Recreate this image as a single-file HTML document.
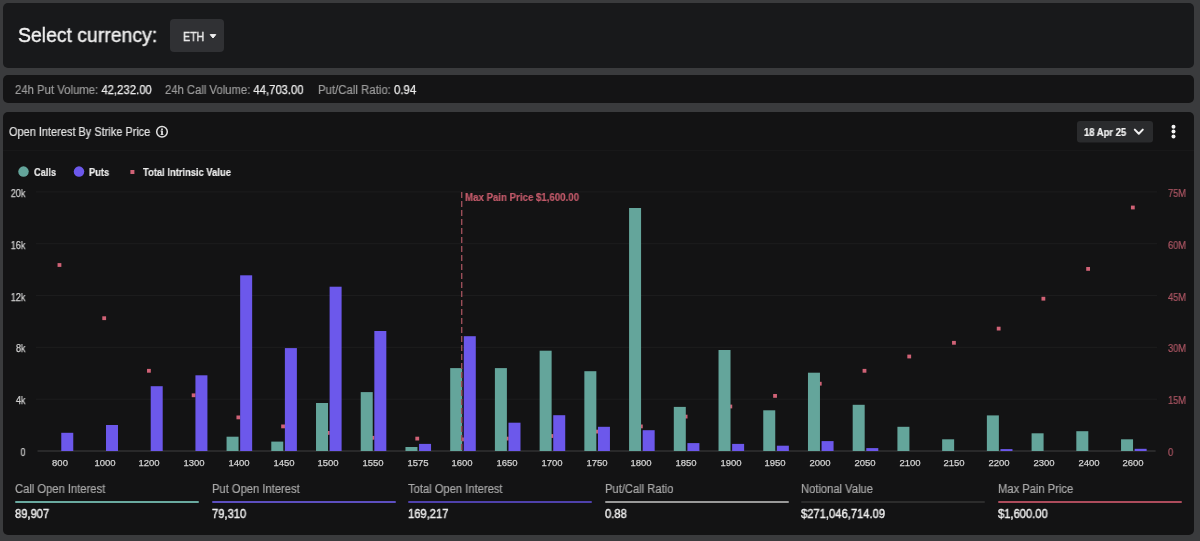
<!DOCTYPE html>
<html><head><meta charset="utf-8">
<style>
html,body{margin:0;padding:0;}
body{width:1200px;height:541px;background:#3a3b3d;position:relative;overflow:hidden;font-family:"Liberation Sans",sans-serif;}
.p{position:absolute;left:3px;width:1191px;border-radius:5px;}
#p1{top:3px;height:65px;background:#18191b;}
#p2{top:75px;height:28.3px;background:#141415;}
#p3{top:111.7px;height:423px;background:#131314;}
.a{position:absolute;white-space:nowrap;transform-origin:0 0;z-index:3;will-change:transform;-webkit-text-stroke:0.2px currentColor;}
.a b{color:#ececec;font-weight:normal;-webkit-text-stroke:0.25px #ececec;}
#btn{position:absolute;left:170px;top:19px;width:54px;height:33px;border-radius:4px;background:#303134;}
.caret{position:absolute;left:210px;top:34.5px;width:0;height:0;border-left:3.5px solid transparent;border-right:3.5px solid transparent;border-top:4px solid #e6e6e6;}
.yl{position:absolute;left:0;width:28.2px;text-align:right;font-size:10px;line-height:10px;color:#d2d2d2;-webkit-text-stroke:0.25px #d2d2d2;transform:scaleX(0.9);transform-origin:0 0;will-change:transform;}
.yr{position:absolute;left:1168px;font-size:10px;line-height:10px;color:#ad5664;-webkit-text-stroke:0.2px #ad5664;transform:scaleX(0.93);transform-origin:0 0;will-change:transform;}
.xl{position:absolute;width:40px;text-align:center;font-size:9.5px;line-height:9.5px;color:#d2d2d2;-webkit-text-stroke:0.25px #d2d2d2;will-change:transform;}
.ln{position:absolute;top:500.5px;height:2.1px;width:184px;border-radius:1.5px;}
svg{position:absolute;left:0;top:0;}
</style></head><body>
<div class="p" id="p1"></div>
<div class="p" id="p2"></div>
<div class="p" id="p3"></div>
<div id="btn"></div>
<div style="position:absolute;left:3px;top:150px;width:1191px;height:1px;background:#181819"></div>
<svg width="1200" height="541" style="z-index:1">
<circle cx="162" cy="131.8" r="5.3" fill="none" stroke="#e0e0e0" stroke-width="1.5"/>
<rect x="161.1" y="130.6" width="1.8" height="4.2" fill="#e0e0e0"/>
<rect x="160.5" y="130.6" width="1.4" height="0.9" fill="#e0e0e0"/>
<rect x="160.6" y="134.1" width="2.8" height="0.9" fill="#e0e0e0"/>
<circle cx="162" cy="129.2" r="0.95" fill="#e0e0e0"/>
<circle cx="23.5" cy="171.6" r="5.25" fill="#64a59b"/>
<circle cx="79" cy="171.6" r="5.25" fill="#6c58eb"/>
<path d="M210.2,34.6 L215.8,34.6 L213,38 Z" fill="#f0f0f0" stroke="#f0f0f0" stroke-width="1" stroke-linejoin="round"/>
<rect x="130.4" y="170" width="4" height="4" fill="#d06276"/>
<rect x="1077" y="121" width="76" height="21.5" rx="3" fill="#2a2b2d"/>
<polyline points="1134.8,129.6 1138.8,133.8 1142.8,129.6" fill="none" stroke="#f0f0f0" stroke-width="2" stroke-linecap="round" stroke-linejoin="round"/>
<circle cx="1173.5" cy="126.7" r="2" fill="#f4f4f4"/>
<circle cx="1173.5" cy="131.6" r="2" fill="#f4f4f4"/>
<circle cx="1173.5" cy="136.5" r="2" fill="#f4f4f4"/>
<line x1="36" x2="1157.1" y1="191.90" y2="191.90" stroke="#1d1d1e" stroke-width="1"/>
<line x1="36" x2="1157.1" y1="243.72" y2="243.72" stroke="#1d1d1e" stroke-width="1"/>
<line x1="36" x2="1157.1" y1="295.54" y2="295.54" stroke="#1d1d1e" stroke-width="1"/>
<line x1="36" x2="1157.1" y1="347.36" y2="347.36" stroke="#1d1d1e" stroke-width="1"/>
<line x1="36" x2="1157.1" y1="399.18" y2="399.18" stroke="#1d1d1e" stroke-width="1"/>
<line x1="37.5" x2="1155.6" y1="451.00" y2="451.00" stroke="#323232" stroke-width="1.6"/>
<rect x="57.56" y="263.10" width="3.8" height="3.8" fill="#d06276"/>
<rect x="102.29" y="316.30" width="3.8" height="3.8" fill="#d06276"/>
<rect x="147.01" y="368.90" width="3.8" height="3.8" fill="#d06276"/>
<rect x="191.73" y="393.40" width="3.8" height="3.8" fill="#d06276"/>
<rect x="236.46" y="415.50" width="3.8" height="3.8" fill="#d06276"/>
<rect x="281.18" y="424.50" width="3.8" height="3.8" fill="#d06276"/>
<rect x="325.91" y="431.00" width="3.8" height="3.8" fill="#d06276"/>
<rect x="370.63" y="435.90" width="3.8" height="3.8" fill="#d06276"/>
<rect x="415.35" y="436.70" width="3.8" height="3.8" fill="#d06276"/>
<rect x="460.08" y="437.50" width="3.8" height="3.8" fill="#d06276"/>
<rect x="504.80" y="436.70" width="3.8" height="3.8" fill="#d06276"/>
<rect x="549.53" y="434.10" width="3.8" height="3.8" fill="#d06276"/>
<rect x="594.25" y="429.70" width="3.8" height="3.8" fill="#d06276"/>
<rect x="638.97" y="424.50" width="3.8" height="3.8" fill="#d06276"/>
<rect x="683.70" y="414.70" width="3.8" height="3.8" fill="#d06276"/>
<rect x="728.42" y="404.60" width="3.8" height="3.8" fill="#d06276"/>
<rect x="773.15" y="394.00" width="3.8" height="3.8" fill="#d06276"/>
<rect x="817.87" y="381.80" width="3.8" height="3.8" fill="#d06276"/>
<rect x="862.59" y="368.90" width="3.8" height="3.8" fill="#d06276"/>
<rect x="907.32" y="354.60" width="3.8" height="3.8" fill="#d06276"/>
<rect x="952.04" y="340.90" width="3.8" height="3.8" fill="#d06276"/>
<rect x="996.77" y="326.70" width="3.8" height="3.8" fill="#d06276"/>
<rect x="1041.49" y="296.80" width="3.8" height="3.8" fill="#d06276"/>
<rect x="1086.21" y="267.00" width="3.8" height="3.8" fill="#d06276"/>
<rect x="1130.94" y="205.60" width="3.8" height="3.8" fill="#d06276"/>
<rect x="61.26" y="432.80" width="12" height="18.20" fill="#6c58eb"/>
<rect x="105.99" y="425.00" width="12" height="26.00" fill="#6c58eb"/>
<rect x="150.71" y="386.20" width="12" height="64.80" fill="#6c58eb"/>
<rect x="195.43" y="375.30" width="12" height="75.70" fill="#6c58eb"/>
<rect x="226.56" y="436.70" width="12" height="14.30" fill="#64a59b"/>
<rect x="240.16" y="275.30" width="12" height="175.70" fill="#6c58eb"/>
<rect x="271.28" y="441.60" width="12" height="9.40" fill="#64a59b"/>
<rect x="284.88" y="348.10" width="12" height="102.90" fill="#6c58eb"/>
<rect x="316.01" y="403.00" width="12" height="48.00" fill="#64a59b"/>
<rect x="329.61" y="286.70" width="12" height="164.30" fill="#6c58eb"/>
<rect x="360.73" y="392.10" width="12" height="58.90" fill="#64a59b"/>
<rect x="374.33" y="331.00" width="12" height="120.00" fill="#6c58eb"/>
<rect x="405.45" y="447.00" width="12" height="4.00" fill="#64a59b"/>
<rect x="419.05" y="443.90" width="12" height="7.10" fill="#6c58eb"/>
<rect x="450.18" y="368.10" width="12" height="82.90" fill="#64a59b"/>
<rect x="463.78" y="336.20" width="12" height="114.80" fill="#6c58eb"/>
<rect x="494.90" y="368.10" width="12" height="82.90" fill="#64a59b"/>
<rect x="508.50" y="422.70" width="12" height="28.30" fill="#6c58eb"/>
<rect x="539.63" y="350.70" width="12" height="100.30" fill="#64a59b"/>
<rect x="553.23" y="415.20" width="12" height="35.80" fill="#6c58eb"/>
<rect x="584.35" y="371.20" width="12" height="79.80" fill="#64a59b"/>
<rect x="597.95" y="426.80" width="12" height="24.20" fill="#6c58eb"/>
<rect x="629.07" y="208.00" width="12" height="243.00" fill="#64a59b"/>
<rect x="642.67" y="430.20" width="12" height="20.80" fill="#6c58eb"/>
<rect x="673.80" y="406.90" width="12" height="44.10" fill="#64a59b"/>
<rect x="687.40" y="443.10" width="12" height="7.90" fill="#6c58eb"/>
<rect x="718.52" y="350.00" width="12" height="101.00" fill="#64a59b"/>
<rect x="732.12" y="443.90" width="12" height="7.10" fill="#6c58eb"/>
<rect x="763.25" y="410.30" width="12" height="40.70" fill="#64a59b"/>
<rect x="776.85" y="445.70" width="12" height="5.30" fill="#6c58eb"/>
<rect x="807.97" y="372.70" width="12" height="78.30" fill="#64a59b"/>
<rect x="821.57" y="441.10" width="12" height="9.90" fill="#6c58eb"/>
<rect x="852.69" y="404.80" width="12" height="46.20" fill="#64a59b"/>
<rect x="866.29" y="448.10" width="12" height="2.90" fill="#6c58eb"/>
<rect x="897.42" y="426.80" width="12" height="24.20" fill="#64a59b"/>
<rect x="942.14" y="439.30" width="12" height="11.70" fill="#64a59b"/>
<rect x="986.87" y="415.40" width="12" height="35.60" fill="#64a59b"/>
<rect x="1000.47" y="449.10" width="12" height="1.90" fill="#6c58eb"/>
<rect x="1031.59" y="433.30" width="12" height="17.70" fill="#64a59b"/>
<rect x="1076.31" y="431.20" width="12" height="19.80" fill="#64a59b"/>
<rect x="1121.04" y="439.30" width="12" height="11.70" fill="#64a59b"/>
<rect x="1134.64" y="448.80" width="12" height="2.20" fill="#6c58eb"/>
<line x1="461.7" x2="461.7" y1="191.9" y2="450.5" stroke="#9a4e58" stroke-width="1.4" stroke-dasharray="6 3"/>
</svg>
<div class="a" id="sel" style="left:18.0px;top:26.49px;font-size:19.5px;line-height:19.5px;color:#f2f2f2;transform:scaleX(0.995);-webkit-text-stroke:0.4px #f2f2f2;">Select currency:</div>
<div class="a" id="eth" style="left:183.4px;top:30.67px;font-size:12.2px;line-height:12.2px;color:#e8e8e8;transform:scaleX(0.87);-webkit-text-stroke:0.45px #e8e8e8;">ETH</div>
<div class="a" id="s1" style="left:15.3px;top:83.84px;font-size:12px;line-height:12px;color:#9c9c9c;transform:scaleX(0.945);">24h Put Volume: <b>42,232.00</b></div>
<div class="a" id="s2" style="left:165.4px;top:83.84px;font-size:12px;line-height:12px;color:#9c9c9c;transform:scaleX(0.94);">24h Call Volume: <b>44,703.00</b></div>
<div class="a" id="s3" style="left:317.7px;top:83.84px;font-size:12px;line-height:12px;color:#9c9c9c;transform:scaleX(0.95);">Put/Call Ratio: <b>0.94</b></div>
<div class="a" id="title" style="left:8.8px;top:125.84px;font-size:12px;line-height:12px;color:#e2e2e2;transform:scaleX(0.913);">Open Interest By Strike Price</div>
<div class="a" id="lg1" style="left:33.8px;top:166.63px;font-size:10.6px;line-height:10.6px;color:#ececec;transform:scaleX(0.87);font-weight:bold;">Calls</div>
<div class="a" id="lg2" style="left:89.4px;top:166.63px;font-size:10.6px;line-height:10.6px;color:#ececec;transform:scaleX(0.88);font-weight:bold;">Puts</div>
<div class="a" id="lg3" style="left:143.4px;top:166.63px;font-size:10.6px;line-height:10.6px;color:#ececec;transform:scaleX(0.885);font-weight:bold;">Total Intrinsic Value</div>
<div class="a" id="date" style="left:1083.8px;top:127.94px;font-size:10px;line-height:10px;color:#f2f2f2;transform:scaleX(0.945);font-weight:bold;">18 Apr 25</div>
<div class="a" id="mp" style="left:464.8px;top:191.60px;font-size:10.75px;line-height:10.75px;color:#c25a6a;transform:scaleX(0.9);font-weight:bold;">Max Pain Price $1,600.00</div>
<div class="a" id="l1" style="left:15px;top:482.64px;font-size:12px;line-height:12px;color:#a9a9a9;transform:scaleX(0.932);">Call Open Interest</div>
<div class="a" id="v1" style="left:15px;top:508.14px;font-size:12px;line-height:12px;color:#ededed;transform:scaleX(0.932);-webkit-text-stroke:0.4px #ededed;">89,907</div>
<div class="a" id="l2" style="left:211.5px;top:482.64px;font-size:12px;line-height:12px;color:#a9a9a9;transform:scaleX(0.932);">Put Open Interest</div>
<div class="a" id="v2" style="left:211.5px;top:508.14px;font-size:12px;line-height:12px;color:#ededed;transform:scaleX(0.932);-webkit-text-stroke:0.4px #ededed;">79,310</div>
<div class="a" id="l3" style="left:408px;top:482.64px;font-size:12px;line-height:12px;color:#a9a9a9;transform:scaleX(0.932);">Total Open Interest</div>
<div class="a" id="v3" style="left:408px;top:508.14px;font-size:12px;line-height:12px;color:#ededed;transform:scaleX(0.932);-webkit-text-stroke:0.4px #ededed;">169,217</div>
<div class="a" id="l4" style="left:605px;top:482.64px;font-size:12px;line-height:12px;color:#a9a9a9;transform:scaleX(0.932);">Put/Call Ratio</div>
<div class="a" id="v4" style="left:605px;top:508.14px;font-size:12px;line-height:12px;color:#ededed;transform:scaleX(0.932);-webkit-text-stroke:0.4px #ededed;">0.88</div>
<div class="a" id="l5" style="left:801px;top:482.64px;font-size:12px;line-height:12px;color:#a9a9a9;transform:scaleX(0.932);">Notional Value</div>
<div class="a" id="v5" style="left:801px;top:508.14px;font-size:12px;line-height:12px;color:#ededed;transform:scaleX(0.932);-webkit-text-stroke:0.4px #ededed;">$271,046,714.09</div>
<div class="a" id="l6" style="left:997.5px;top:482.64px;font-size:12px;line-height:12px;color:#a9a9a9;transform:scaleX(0.932);">Max Pain Price</div>
<div class="a" id="v6" style="left:997.5px;top:508.14px;font-size:12px;line-height:12px;color:#ededed;transform:scaleX(0.932);-webkit-text-stroke:0.4px #ededed;">$1,600.00</div>
<div style="position:absolute;left:0;top:0;z-index:2">
<div class="yl" style="top:188.94px">20k</div>
<div class="yr" style="top:188.94px">75M</div>
<div class="yl" style="top:240.76px">16k</div>
<div class="yr" style="top:240.76px">60M</div>
<div class="yl" style="top:292.57px">12k</div>
<div class="yr" style="top:292.57px">45M</div>
<div class="yl" style="top:344.39px">8k</div>
<div class="yr" style="top:344.39px">30M</div>
<div class="yl" style="top:396.22px">4k</div>
<div class="yr" style="top:396.22px">15M</div>
<div class="yl" style="top:448.03px">0</div>
<div class="yr" style="top:448.03px">0</div>
<div class="xl" style="left:39.9px;top:457.86px">800</div>
<div class="xl" style="left:84.6px;top:457.86px">1000</div>
<div class="xl" style="left:129.3px;top:457.86px">1200</div>
<div class="xl" style="left:174.0px;top:457.86px">1300</div>
<div class="xl" style="left:218.8px;top:457.86px">1400</div>
<div class="xl" style="left:263.5px;top:457.86px">1450</div>
<div class="xl" style="left:308.2px;top:457.86px">1500</div>
<div class="xl" style="left:352.9px;top:457.86px">1550</div>
<div class="xl" style="left:397.7px;top:457.86px">1575</div>
<div class="xl" style="left:442.4px;top:457.86px">1600</div>
<div class="xl" style="left:487.1px;top:457.86px">1650</div>
<div class="xl" style="left:531.8px;top:457.86px">1700</div>
<div class="xl" style="left:576.5px;top:457.86px">1750</div>
<div class="xl" style="left:621.3px;top:457.86px">1800</div>
<div class="xl" style="left:666.0px;top:457.86px">1850</div>
<div class="xl" style="left:710.7px;top:457.86px">1900</div>
<div class="xl" style="left:755.4px;top:457.86px">1950</div>
<div class="xl" style="left:800.2px;top:457.86px">2000</div>
<div class="xl" style="left:844.9px;top:457.86px">2050</div>
<div class="xl" style="left:889.6px;top:457.86px">2100</div>
<div class="xl" style="left:934.3px;top:457.86px">2150</div>
<div class="xl" style="left:979.1px;top:457.86px">2200</div>
<div class="xl" style="left:1023.8px;top:457.86px">2300</div>
<div class="xl" style="left:1068.5px;top:457.86px">2400</div>
<div class="xl" style="left:1113.2px;top:457.86px">2600</div>
</div>
<div class="ln" style="left:15px;background:#6aaaa0"></div>
<div class="ln" style="left:211.5px;background:#5d4fc0"></div>
<div class="ln" style="left:408px;background:#4f41ac"></div>
<div class="ln" style="left:605px;background:#999999"></div>
<div class="ln" style="left:801px;background:#2c2c2c"></div>
<div class="ln" style="left:997.5px;background:#ad4c5c"></div>
</body></html>
